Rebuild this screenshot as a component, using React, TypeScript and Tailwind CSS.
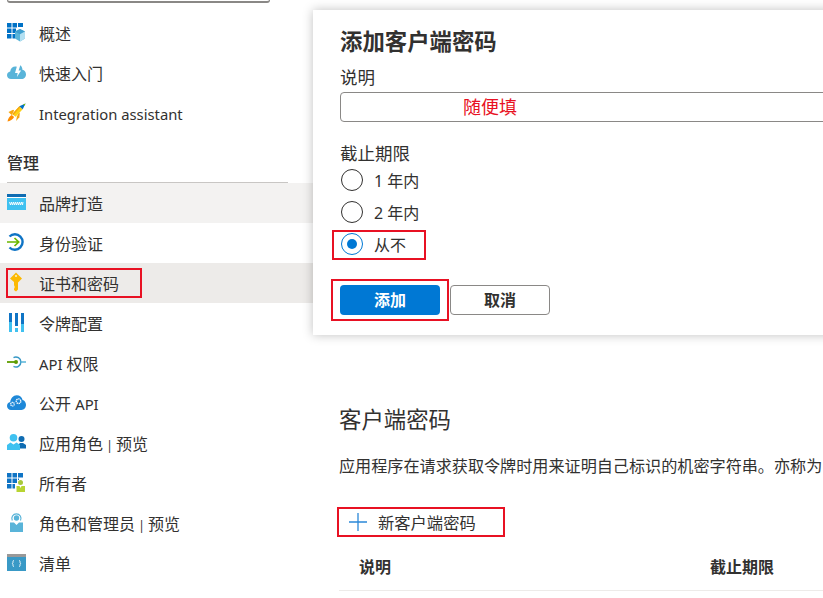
import React from "react";

function OverviewIcon() {
  return (
    <svg width="18" height="19" viewBox="0 0 18 19">
      <path d="M0 0h4.500v4.500H0zM5.500 0H10v4.500H5.500zM11 0h5v4H11zM0 5.500h4.500V10H0zM5.500 5.500H9V10H5.500zM0 11h4.500v4.500H0zM5.500 11H8v4.500H5.500z" fill="#0072c6" />
      <path d="M13 6l5 2.500v7L13 18.500l-5-3v-7z" fill="#59b4d9" />
      <path d="M13 6l5 2.500-5 2.700-5-2.700z" fill="#3f9fcf" />
      <path d="M13 11.200l5-2.700v7L13 18.500z" fill="#b3e0f2" />
    </svg>
  );
}

function CloudIcon() {
  return (
    <svg width="19" height="14" viewBox="0 0 19 14">
      <path d="M4 14C1.800 14 0 12.300 0 10.200c0-1.900 1.400-3.400 3.200-3.700C3.600 3.300 5.800 1.500 8.300 1.500c.5 0 1 .1 1.500.2L8 8h2.700l-.8 4 4.200-6.500h-2.500L13.300.3c1.300 1 2.100 2.600 2.100 4.400 2 .5 3.600 2.300 3.600 4.500 0 2.700-1.900 4.800-4.400 4.800z" fill="#59b4d9" />
    </svg>
  );
}

function RocketIcon() {
  return (
    <svg width="19" height="19" viewBox="0 0 20 20">
      <path d="M5 12.500C3 13.500.8 16.500.5 19.500c2.800-.5 5.600-2.300 7-4.800z" fill="#ff8c00" />
      <path d="M1.500 9.500l5-2.500 1 1-2.500 4.500-.7-.5z" fill="#f7a711" />
      <path d="M10.500 14l2-4 1 1-.5 4-3.500 4z" fill="#f7a711" />
      <path d="M5.500 11.500L13 3.500l3.500 3-7.500 8z" fill="#fcd116" />
      <path d="M5.500 11.500L13 3.500l1 1-7.500 8.500z" fill="#f7a711" />
      <path d="M13 3.500L19.500.500l-3 6z" fill="#0072c6" />
      <path d="M17 1.500L19.500.500l-1 2.300z" fill="#7fba00" />
    </svg>
  );
}

function BrandIcon() {
  return (
    <svg width="19" height="16" viewBox="0 0 19 16">
      <rect x="0" y="0" width="19" height="16" fill="#3fc1f0" />
      <rect x="0" y="0" width="19" height="3" fill="#0f6cb2" />
      <rect x="0" y="3" width="19" height="1" fill="#ffffff" />
      <path d="M2.500 8l1 3 1-3 1 3 1-3 1 3 1-3 1 3 1-3 1 3 1-3 1 3 1-3 1 3 .5-3" fill="none" stroke="#ffffff" strokeWidth="0.900" />
    </svg>
  );
}

function AuthIcon() {
  return (
    <svg width="18" height="18" viewBox="0 0 18 18">
      <path d="M2.500 3.500A7.700 7.700 0 1 1 2.500 14.500" fill="none" stroke="#0f74c5" strokeWidth="2.400" />
      <path d="M0 9h11M7.500 5l4.200 4-4.200 4" fill="none" stroke="#6bb700" strokeWidth="1.700" />
    </svg>
  );
}

function KeyIcon() {
  return (
    <svg width="14" height="20" viewBox="0 0 14 20" className="ml-[2px]">
      <path d="M7 0.500L13 6.500 9 10.500v7L7 19.500 5 18v-1.500l1-.7-1-.8 1-.8-1-.8v-3.400L1 6.500z" fill="#fcb900" />
      <circle cx="7" cy="4" r="1" fill="#fff3c4" />
    </svg>
  );
}

function TokenIcon() {
  return (
    <svg width="15" height="19" viewBox="0 0 15 19" className="ml-[2px]">
      <rect x="0" y="0" width="3" height="19" fill="#3fc1f0" />
      <rect x="0" y="0" width="3" height="9" fill="#0f74c5" />
      <rect x="6" y="0" width="3" height="13" fill="#0f74c5" />
      <rect x="6" y="15" width="3" height="4" fill="#3fc1f0" />
      <rect x="12" y="0" width="3" height="19" fill="#3fc1f0" />
      <rect x="12" y="0" width="3" height="11" fill="#0f74c5" />
    </svg>
  );
}

function ApiPermIcon() {
  return (
    <svg width="19" height="12" viewBox="0 0 19 12">
      <path d="M6.500 1.600A5 5 0 1 1 6.500 10.400" fill="none" stroke="#3999c6" strokeWidth="1.500" />
      <path d="M13.500 6H19" stroke="#59b4d9" strokeWidth="1.500" />
      <path d="M0 6h9" stroke="#5e9c00" strokeWidth="1.800" />
      <circle cx="9" cy="6" r="2" fill="#5e9c00" />
    </svg>
  );
}

function ExposeIcon() {
  return (
    <svg width="19" height="15" viewBox="0 0 19 15">
      <path d="M4 15C1.800 15 0 13.300 0 11c0-2 1.400-3.600 3.200-3.900C3.700 3.200 6.200.2 9.700.2c3 0 5.300 2 5.900 4.800 2 .4 3.400 2.600 3.400 4.800 0 2.900-1.900 5.200-4.500 5.200z" fill="#1e88d8" />
      <circle cx="11.500" cy="6.200" r="2.300" fill="none" stroke="#ffffff" strokeWidth="1.300" strokeDasharray="1.300 0.600" />
      <circle cx="5.500" cy="9.200" r="1.800" fill="none" stroke="#ffffff" strokeWidth="1.200" strokeDasharray="1.200 0.500" />
    </svg>
  );
}

function RolesIcon() {
  return (
    <svg width="19" height="16" viewBox="0 0 19 16">
      <circle cx="14.500" cy="5" r="3" fill="#0f6cb2" />
      <path d="M11 14.500V11l2-2h3l3 2v3.500z" fill="#0f6cb2" />
      <circle cx="6.500" cy="3.800" r="3.800" fill="#3fc1f0" />
      <path d="M0 16v-5l3.500-2.500 3 2 3-2 3.500 2.500v5z" fill="#3fc1f0" />
    </svg>
  );
}

function OwnersIcon() {
  return (
    <svg width="18" height="19" viewBox="0 0 18 19">
      <path d="M0 0h4.500v4.500H0zM5.500 0H10v4.500H5.500zM11 0h5v4.500H11zM0 5.500h4.500V10H0zM5.500 5.500H10V10H5.500zM11 5.500h1V7h-1zM0 11h4.500v4.500H0zM5.500 11H8v4.500H5.500z" fill="#0f74c5" />
      <circle cx="13.500" cy="9.500" r="2.500" fill="#a7c93a" />
      <path d="M9.500 13H18v6H9.500z" fill="#b8d432" />
      <path d="M12.500 13h2l-1 2z" fill="#ffffff" />
    </svg>
  );
}

function AdminIcon() {
  return (
    <svg width="13" height="19" viewBox="0 0 13 19" className="ml-[3px]">
      <path d="M2.300 7.500A4.600 4.600 0 1 1 10.500 7.500" fill="none" stroke="#59b4d9" strokeWidth="1.200" />
      <circle cx="6.500" cy="5" r="2.700" fill="#59b4d9" />
      <path d="M0 19V9.500h4L6.500 12 9 9.500h4V19z" fill="#59b4d9" />
    </svg>
  );
}

function ManifestIcon() {
  return (
    <svg width="19" height="17" viewBox="0 0 19 17">
      <rect x="0" y="0" width="19" height="17" fill="#3999c6" />
      <rect x="0" y="0" width="19" height="3" fill="#999999" />
      <path d="M7 6.500c-1 0-1 .5-1 1.500s-.500 1.500-.800 1.500c.3 0 .8.500.8 1.500s0 1.500 1 1.500M12 6.500c1 0 1 .5 1 1.500s.500 1.500.800 1.500c-.3 0-.8.500-.8 1.500s0 1.500-1 1.500" fill="none" stroke="#ffffff" strokeWidth="0.900" />
    </svg>
  );
}

type NavItem = { label: React.ReactNode; icon: React.ReactNode; bg?: string; boxed?: boolean };

const top: NavItem[] = [
  { label: "概述", icon: <OverviewIcon /> },
  { label: "快速入门", icon: <CloudIcon /> },
  { label: <span className="text-[14.8px]">Integration assistant</span>, icon: <RocketIcon /> },
];

const manage: NavItem[] = [
  { label: "品牌打造", icon: <BrandIcon />, bg: "bg-[#f3f2f1]" },
  { label: "身份验证", icon: <AuthIcon /> },
  { label: "证书和密码", icon: <KeyIcon />, bg: "bg-[#edebe9]", boxed: true },
  { label: "令牌配置", icon: <TokenIcon /> },
  { label: <><span className="text-[14.8px]">API</span> 权限</>, icon: <ApiPermIcon /> },
  { label: <>公开 <span className="text-[14.8px]">API</span></>, icon: <ExposeIcon /> },
  { label: <>应用角色<span className="text-xs"> | </span>预览</>, icon: <RolesIcon /> },
  { label: "所有者", icon: <OwnersIcon /> },
  { label: <>角色和管理员<span className="text-xs"> | </span>预览</>, icon: <AdminIcon /> },
  { label: "清单", icon: <ManifestIcon /> },
];

function Row({ item }: { item: NavItem }) {
  return (
    <div className={`relative flex h-10 items-center pl-[7px] ${item.bg ?? ""}`}>
      <span className="flex h-5 w-8 shrink-0 -translate-y-[1px] items-center">{item.icon}</span>
      <span className="translate-y-[1px] text-base text-[#323130]">{item.label}</span>
      {item.boxed && <span className="absolute left-[6px] top-[5px] h-[30px] w-[136px] border-2 border-[#e81123]" />}
    </div>
  );
}

function Radio({ label, checked, boxed }: { label: string; checked?: boolean; boxed?: boolean }) {
  return (
    <div className="relative flex h-8 items-center gap-[11px] pl-[1px]">
      <span className={`flex h-[22px] w-[22px] items-center justify-center rounded-full border ${checked ? "border-[#0078d4]" : "border-[#323130]"}`}>
        {checked && <span className="h-[10px] w-[10px] rounded-full bg-[#0078d4]" />}
      </span>
      <span className="translate-y-[1px] text-base text-[#323130]">{label}</span>
      {boxed && <span className="absolute left-[-8px] top-[2px] h-[30px] w-[94px] border-2 border-[#e81123]" />}
    </div>
  );
}

export default function App() {
  return (
    <div
      className="relative flex h-[598px] w-[823px] overflow-hidden bg-white"
      style={{ fontFamily: '"Noto Sans", "Noto Sans CJK SC", sans-serif' }}
    >
      <aside className="w-[313px] shrink-0">
        <div className="ml-[7px] h-[3px] w-[263px] rounded-b-sm border-x border-b-2 border-[#8a8886]" />
        <nav className="mt-[10px]">
          {top.map((item, i) => (
            <Row key={i} item={item} />
          ))}
        </nav>
        <div className="ml-[7px] mt-[10px] flex h-10 w-[281px] items-center border-b border-[#c8c6c4] text-base font-medium text-[#323130]">
          管理
        </div>
        <nav>
          {manage.map((item, i) => (
            <Row key={i} item={item} />
          ))}
        </nav>
      </aside>

      <main className="flex min-w-0 flex-1 flex-col pl-[26px] pt-[404px]">
        <h2 className="text-[22.4px] leading-8 text-[#323130]">客户端密码</h2>
        <p className="mt-5 whitespace-nowrap text-[16.13px] leading-5 text-[#323130]">
          应用程序在请求获取令牌时用来证明自己标识的机密字符串。亦称为
        </p>
        <div className="mt-[31px] flex h-[30px] w-[168px] -translate-x-[2px] items-center gap-[10px] border-2 border-[#e81123] pl-[9px]">
          <svg width="20" height="20" viewBox="0 0 20 20">
            <path d="M10 1v18M1 10h18" stroke="#2b88d8" strokeWidth="1.300" />
          </svg>
          <span className="translate-y-[1px] text-[16.3px] text-[#323130]">新客户端密码</span>
        </div>
        <div className="mt-[6px] flex h-12 items-center border-b border-[#edebe9] pl-5 text-base font-bold text-[#323130]">
          <span className="w-[351px]">说明</span>
          <span>截止期限</span>
        </div>
      </main>

      <section className="absolute left-[313px] top-[10px] h-[325px] w-[530px] bg-white pl-[27px] pt-4 shadow-[0_0_10px_rgba(0,0,0,0.25)]">
        <h1 className="text-[22.4px] font-bold leading-8 text-[#323130]">添加客户端密码</h1>
        <div className="mt-[7px] text-[17.5px] leading-6 text-[#323130]">说明</div>
        <div className="mt-[3px] flex h-[30px] w-full items-center rounded-sm border border-[#8a8886] pl-[122px] text-lg text-[#e81123]">
          随便填
        </div>
        <div className="mt-[19px] text-[17.5px] leading-6 text-[#323130]">截止期限</div>
        <div className="mt-[-1px] flex flex-col">
          <Radio label="1 年内" />
          <Radio label="2 年内" />
          <Radio label="从不" checked boxed />
        </div>
        <div className="relative mt-[25px] flex gap-[10px]">
          <button className="h-[30px] w-[100px] rounded-sm bg-[#0078d4] text-base font-bold text-white">添加</button>
          <button className="h-[30px] w-[100px] rounded-sm border border-[#8a8886] bg-white text-base font-bold text-[#323130]">取消</button>
          <span className="absolute left-[-9px] top-[-6px] h-[42px] w-[118px] border-2 border-[#e81123]" />
        </div>
      </section>
    </div>
  );
}
